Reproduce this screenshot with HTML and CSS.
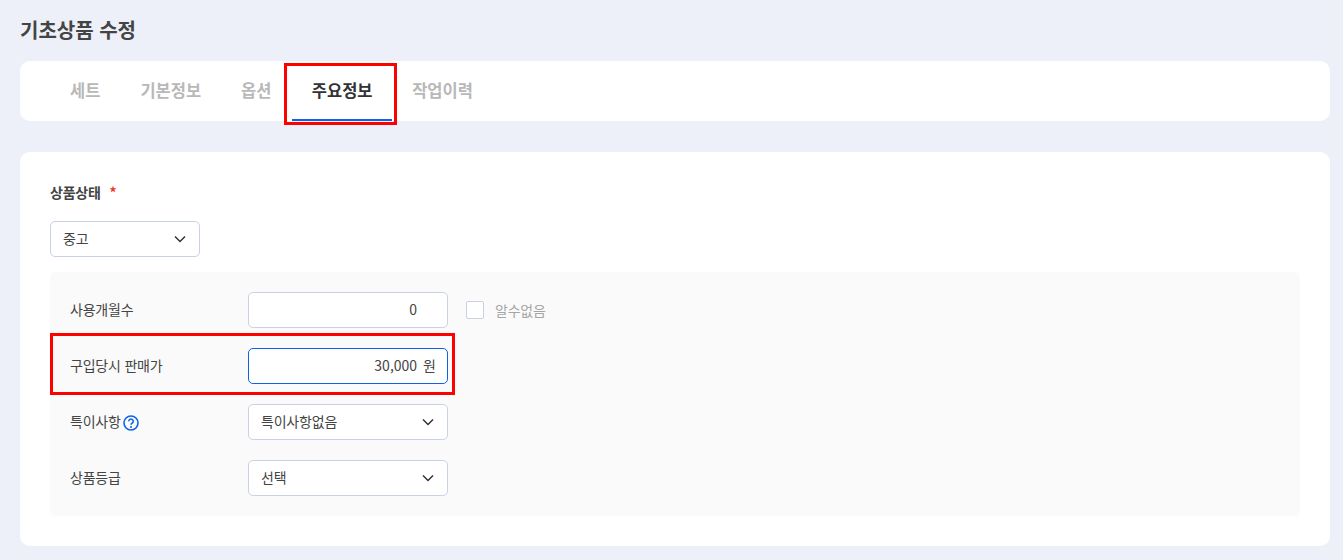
FILE: index.html
```html
<!DOCTYPE html>
<html lang="ko">
<head>
  <meta charset="UTF-8" />
  <meta name="viewport" content="width=device-width, initial-scale=1.0" />
  <title>기초상품 수정</title>
  <link rel="stylesheet" href="styles.css">
</head>
<body>
  <h1 class="page-title">기초상품 수정</h1>

  <div class="tab-card">
    <a href="#" class="tab">세트</a>
    <a href="#" class="tab">기본정보</a>
    <a href="#" class="tab">옵션</a>
    <a href="#" class="tab tab-active">주요정보<span class="mark mark-tab"></span></a>
    <a href="#" class="tab">작업이력</a>
  </div>

  <div class="form-card">
    <div class="section-label">상품상태 <span class="required">*</span></div>
    <div class="select select-short">
      <span>중고</span>
      <svg class="chevron" viewBox="0 0 12 8"><path d="M1 1.5l5 5 5-5" /></svg>
    </div>

    <div class="panel">
      <div class="row">
        <label class="row-label">사용개월수</label>
        <div class="field"><span class="field-value">0</span></div>
        <div class="unknown">
          <span class="checkbox"></span>
          <span class="unknown-text">알수없음</span>
        </div>
      </div>
      <div class="row">
        <span class="mark mark-row"></span>
        <label class="row-label">구입당시 판매가</label>
        <div class="field field-focus"><span class="field-value">30,000</span><span class="unit">원</span></div>
      </div>
      <div class="row">
        <label class="row-label">특이사항
          <svg class="help" viewBox="0 0 16 16">
            <circle cx="8" cy="8" r="7" />
            <path d="M5.8 6.2a2.2 2.2 0 1 1 3.4 1.9c-.8.5-1.2.9-1.2 1.7" />
            <circle class="help-dot" cx="8" cy="12" r="1" />
          </svg>
        </label>
        <div class="select">
          <span>특이사항없음</span>
          <svg class="chevron" viewBox="0 0 12 8"><path d="M1 1.5l5 5 5-5" /></svg>
        </div>
      </div>
      <div class="row">
        <label class="row-label">상품등급</label>
        <div class="select">
          <span>선택</span>
          <svg class="chevron" viewBox="0 0 12 8"><path d="M1 1.5l5 5 5-5" /></svg>
        </div>
      </div>
    </div>
  </div>
</body>
</html>
```

FILE: styles.css
```css
* {
  box-sizing: border-box;
  font-family: "Noto Sans CJK KR", "Noto Sans", sans-serif;
}

body {
  margin: 0;
  padding: 0 13px 0 20px;
  background: #edf0f8;
  height: 560px;
  overflow: hidden;
  color: #444;
}

.page-title {
  margin: 0;
  height: 61px;
  padding-top: 15px;
  font-size: 20px;
  line-height: 30px;
  font-weight: 700;
  color: #444;
}

.tab-card {
  display: flex;
  height: 60px;
  padding: 0 30px;
  background: #fff;
  border-radius: 10px;
}

.tab {
  position: relative;
  padding: 0 20px;
  font-size: 16.5px;
  line-height: 58px;
  font-weight: 700;
  color: #b8b8b8;
  text-decoration: none;
}

.tab-active {
  margin-left: 0.6px;
  padding: 0 19.7px;
  color: #333;
  border-bottom: 2px solid #0f62e6;
}

/* red annotation boxes */
.mark {
  position: absolute;
  border: 3px solid #f00;
  pointer-events: none;
}

.mark-tab {
  top: 2px;
  left: -8px;
  right: -5px;
  height: 62px;
}

.mark-row {
  top: -15px;
  left: -20px;
  width: 405px;
  height: 62px;
}

.form-card {
  margin-top: 31px;
  height: 394px;
  padding: 25px 30px 30px;
  background: #fff;
  border-radius: 10px;
}

.section-label {
  font-size: 14px;
  line-height: 30px;
  letter-spacing: -0.2px;
  font-weight: 700;
  color: #444;
  margin-bottom: 14px;
}

.required {
  color: #f0341e;
  margin-left: 5px;
}

.select,
.field {
  display: flex;
  align-items: center;
  justify-content: space-between;
  width: 200px;
  height: 36px;
  padding: 0 13px 2px 12px;
  background: #fff;
  border: 1px solid #c8d2e4;
  border-radius: 5px;
  font-size: 14px;
  letter-spacing: -0.2px;
  color: #444;
}

.select-short {
  width: 150px;
}

.chevron {
  width: 12px;
  height: 8px;
  margin-top: 2px;
  fill: none;
  stroke: #333;
  stroke-width: 1.5;
}

.panel {
  display: flex;
  flex-direction: column;
  gap: 20px;
  margin-top: 15px;
  height: 244px;
  padding: 20px;
  background: #fafafb;
  border-radius: 5px;
}

.row {
  position: relative;
  display: flex;
  align-items: center;
  height: 36px;
}

.row-label {
  display: flex;
  align-items: center;
  gap: 2px;
  width: 178px;
  padding-bottom: 2px;
  font-size: 14px;
  letter-spacing: -0.2px;
  color: #444;
}

.field {
  justify-content: flex-end;
  padding-right: 11px;
  font-size: 14px;
  letter-spacing: 0;
}

.field-value {
  margin-right: 19px;
}

.field-focus {
  border-color: #0f62e6;
}

.field-focus .field-value {
  margin-right: 6px;
}

.unit {
  font-size: 14px;
}

.unknown {
  display: flex;
  align-items: center;
  gap: 11px;
  margin-left: 18px;
}

.checkbox {
  width: 18px;
  height: 18px;
  background: #fff;
  border: 1px solid #c8d2e4;
  border-radius: 2px;
}

.unknown-text {
  padding-bottom: 1px;
  font-size: 14px;
  letter-spacing: -0.2px;
  color: #a5a5a5;
}

.help {
  width: 16px;
  height: 16px;
  margin-top: 4px;
  fill: none;
  stroke: #0f62e6;
  stroke-width: 1.6;
}

.help-dot {
  fill: #0f62e6;
  stroke: none;
}
```
